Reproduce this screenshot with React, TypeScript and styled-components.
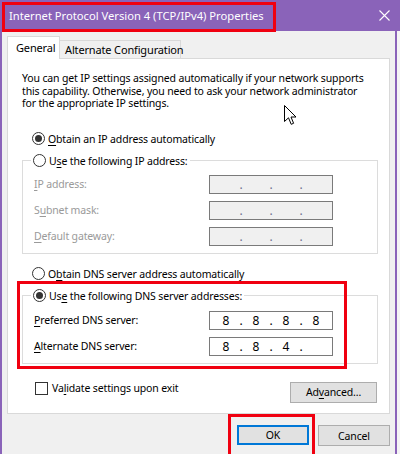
import React from 'react';
import styled, { createGlobalStyle } from 'styled-components';

const GlobalStyle = createGlobalStyle`
  html, body {
    margin: 0;
    padding: 0;
    overflow: hidden;
    background: #f4f4f4;
  }
  body {
    font-family: "Noto Sans", "Open Sans", sans-serif;
    font-size: 10.5px;
    letter-spacing: -0.15px;
    color: #000;
  }
`;

const accent = '#8a63b9';

const Window = styled.div`
  position: relative;
  width: 400px;
  height: 454px;
`;

const TitleBar = styled.div`
  height: 31px;
  display: flex;
  align-items: center;
  background: ${accent};
  color: #fff;
  padding-left: 9px;
`;

const Title = styled.div`
  font-size: 11.2px;
  letter-spacing: 0;
  white-space: nowrap;
`;

const CloseButton = styled.div`
  margin-left: auto;
  width: 32px;
  height: 31px;
  display: flex;
  align-items: center;
  justify-content: center;
`;

const Body = styled.div`
  box-sizing: border-box;
  width: 397px;
  height: 423px;
  border-left: 2px solid ${accent};
  border-right: 2px solid ${accent};
  background: #f0f0f0;
  padding: 6px 5px 0 5px;
`;

const TabStrip = styled.div`
  display: flex;
  align-items: flex-end;
  height: 22px;
  position: relative;
  z-index: 1;
`;

const Tab = styled.div<{ $active?: boolean; $width: number }>`
  box-sizing: border-box;
  width: ${p => p.$width}px;
  height: ${p => (p.$active ? '23px' : '19px')};
  padding-left: ${p => (p.$active ? '8px' : '5px')};
  padding-bottom: ${p => (p.$active ? '2px' : '0')};
  display: flex;
  align-items: center;
  font-size: 11px;
  background: ${p => (p.$active ? '#fff' : '#f0f0f0')};
  border: 1px solid #d9d9d9;
  border-bottom: ${p => (p.$active ? 'none' : '1px solid #d9d9d9')};
  margin-left: ${p => (p.$active ? '0' : '-1px')};
  white-space: nowrap;
`;

const Panel = styled.div`
  box-sizing: border-box;
  height: 356px;
  margin-top: -1px;
  background: #fff;
  border: 1px solid #d9d9d9;
  padding: 13px 11px 0 14px;
`;

const Intro = styled.p`
  margin: 0;
  line-height: 12.5px;
  white-space: nowrap;
`;

const OptionRow = styled.label<{ $gap?: number }>`
  display: flex;
  align-items: center;
  height: 16px;
  gap: 3px;
  white-space: nowrap;
  margin-top: ${p => p.$gap ?? 0}px;
  margin-left: 10px;
`;

const RadioCircle = styled.span<{ $checked?: boolean }>`
  box-sizing: border-box;
  width: 13px;
  height: 13px;
  border-radius: 50%;
  border: 1px solid #333;
  background: #fff;
  display: flex;
  align-items: center;
  justify-content: center;

  &::after {
    content: '';
    width: 7px;
    height: 7px;
    border-radius: 50%;
    background: ${p => (p.$checked ? '#333' : 'transparent')};
  }
`;

const Group = styled.fieldset<{ $gap: number; $top: number }>`
  margin: ${p => p.$gap}px 0 0 0;
  padding: ${p => p.$top}px 0 7px 11px;
  border: 1px solid #dcdcdc;
  min-width: 0;
`;

const Legend = styled.legend`
  padding: 0 2px;
  margin-left: -3px;
  display: flex;
  align-items: center;
  height: 16px;
  gap: 3px;
  white-space: nowrap;
`;

const FieldRows = styled.div`
  display: flex;
  flex-direction: column;
  gap: 7px;
`;

const FieldRow = styled.div<{ $disabled?: boolean }>`
  display: grid;
  grid-template-columns: 175px 124px;
  align-items: center;
  color: ${p => (p.$disabled ? '#9a9a9a' : '#000')};
`;

const IpBox = styled.div<{ $disabled?: boolean }>`
  box-sizing: border-box;
  height: 19px;
  display: flex;
  align-items: center;
  padding-left: 1px;
  border: 1px solid #7a7a7a;
  background: ${p => (p.$disabled ? '#f0f0f0' : '#fff')};
  color: ${p => (p.$disabled ? '#6f6f8f' : '#000')};
  font-size: 12px;
  letter-spacing: 0;
`;

const Octet = styled.span`
  width: 30px;
  text-align: center;
`;

const Dot = styled.span`
  width: 0;
  display: flex;
  justify-content: center;
`;

const BottomRow = styled.div`
  display: flex;
  align-items: flex-start;
  justify-content: space-between;
  margin-top: 18px;
  padding-left: 13px;
  padding-right: 1px;
`;

const CheckRow = styled.label`
  display: flex;
  align-items: center;
  gap: 4px;
  height: 13px;
`;

const CheckBox = styled.span`
  box-sizing: border-box;
  width: 13px;
  height: 13px;
  border: 1px solid #333;
  background: #fff;
`;

const Button = styled.button<{ $default?: boolean; $width: number }>`
  box-sizing: border-box;
  width: ${p => p.$width}px;
  height: ${p => (p.$default ? 20 : 21)}px;
  font: inherit;
  letter-spacing: inherit;
  color: #000;
  background: #e1e1e1;
  border: ${p => (p.$default ? '2px solid #0078d7' : '1px solid #adadad')};
  padding: 0;
  display: flex;
  align-items: center;
  justify-content: center;
`;

const Footer = styled.div`
  display: flex;
  justify-content: flex-end;
  gap: 9px;
  margin-top: 11px;
`;

const Highlight = styled.div<{ $x: number; $y: number; $w: number; $h: number }>`
  position: absolute;
  left: ${p => p.$x}px;
  top: ${p => p.$y}px;
  width: ${p => p.$w}px;
  height: ${p => p.$h}px;
  box-sizing: border-box;
  border: 3px solid #f00010;
  pointer-events: none;
`;

const Pointer = styled.svg`
  position: absolute;
  left: 284px;
  top: 105px;
`;

const Key = styled.u`
  text-underline-offset: 2px;
`;

function Radio({ checked, children, gap }: { checked?: boolean; children: React.ReactNode; gap?: number }) {
  return (
    <OptionRow $gap={gap}>
      <RadioCircle $checked={checked} />
      <span>{children}</span>
    </OptionRow>
  );
}

function IpField({ value, disabled }: { value: string[]; disabled?: boolean }) {
  return (
    <IpBox $disabled={disabled}>
      {value.map((part, i) => (
        <React.Fragment key={i}>
          {i > 0 && <Dot>.</Dot>}
          <Octet>{part}</Octet>
        </React.Fragment>
      ))}
    </IpBox>
  );
}

const empty = ['', '', '', ''];

export default function App() {
  return (
    <>
      <GlobalStyle />
      <Window>
        <TitleBar>
          <Title>Internet Protocol Version 4 (TCP/IPv4) Properties</Title>
          <CloseButton>
            <svg width="11" height="11" viewBox="0 0 11 11">
              <path d="M0.5 0.5 L10.5 10.5 M10.5 0.5 L0.5 10.5" stroke="#fff" strokeWidth="1.1" />
            </svg>
          </CloseButton>
        </TitleBar>
        <Body>
          <TabStrip>
            <Tab $active $width={53}>
              General
            </Tab>
            <Tab $width={122}>Alternate Configuration</Tab>
          </TabStrip>
          <Panel>
            <Intro>
              You can get IP settings assigned automatically if your network supports
              <br />
              this capability. Otherwise, you need to ask your network administrator
              <br />
              for the appropriate IP settings.
            </Intro>
            <Radio checked gap={21}>
              <Key>O</Key>btain an IP address automatically
            </Radio>
            <Group $gap={6} $top={6}>
              <Legend>
                <RadioCircle />
                <span>
                  U<Key>s</Key>e the following IP address:
                </span>
              </Legend>
              <FieldRows>
                <FieldRow $disabled>
                  <span>
                    <Key>I</Key>P address:
                  </span>
                  <IpField value={empty} disabled />
                </FieldRow>
                <FieldRow $disabled>
                  <span>
                    S<Key>u</Key>bnet mask:
                  </span>
                  <IpField value={empty} disabled />
                </FieldRow>
                <FieldRow $disabled>
                  <span>
                    <Key>D</Key>efault gateway:
                  </span>
                  <IpField value={empty} disabled />
                </FieldRow>
              </FieldRows>
            </Group>
            <Radio gap={12}>
              O<Key>b</Key>tain DNS server address automatically
            </Radio>
            <Group $gap={6} $top={7}>
              <Legend>
                <RadioCircle $checked />
                <span>
                  Us<Key>e</Key> the following DNS server addresses:
                </span>
              </Legend>
              <FieldRows>
                <FieldRow>
                  <span>
                    <Key>P</Key>referred DNS server:
                  </span>
                  <IpField value={['8', '8', '8', '8']} />
                </FieldRow>
                <FieldRow>
                  <span>
                    <Key>A</Key>lternate DNS server:
                  </span>
                  <IpField value={['8', '8', '4', '']} />
                </FieldRow>
              </FieldRows>
            </Group>
            <BottomRow>
              <CheckRow>
                <CheckBox />
                <span>
                  Va<Key>l</Key>idate settings upon exit
                </span>
              </CheckRow>
              <Button $width={87}>
                Ad<Key>v</Key>anced...
              </Button>
            </BottomRow>
          </Panel>
          <Footer>
            <Button $default $width={72}>
              OK
            </Button>
            <Button $width={72}>Cancel</Button>
          </Footer>
        </Body>
        <Highlight $x={2} $y={2} $w={274} $h={30} />
        <Highlight $x={17} $y={281} $w={330} $h={88} />
        <Highlight $x={228} $y={414} $w={87} $h={45} />
        <Pointer width="13" height="21" viewBox="0 0 13 21">
          <path
            d="M0.5 0.5 L0.5 16.5 L4.5 12.8 L7.2 19.3 L9.6 18.3 L7 12 L12 12 Z"
            fill="#fff"
            stroke="#000"
            strokeWidth="1"
            strokeLinejoin="miter"
          />
        </Pointer>
      </Window>
    </>
  );
}
